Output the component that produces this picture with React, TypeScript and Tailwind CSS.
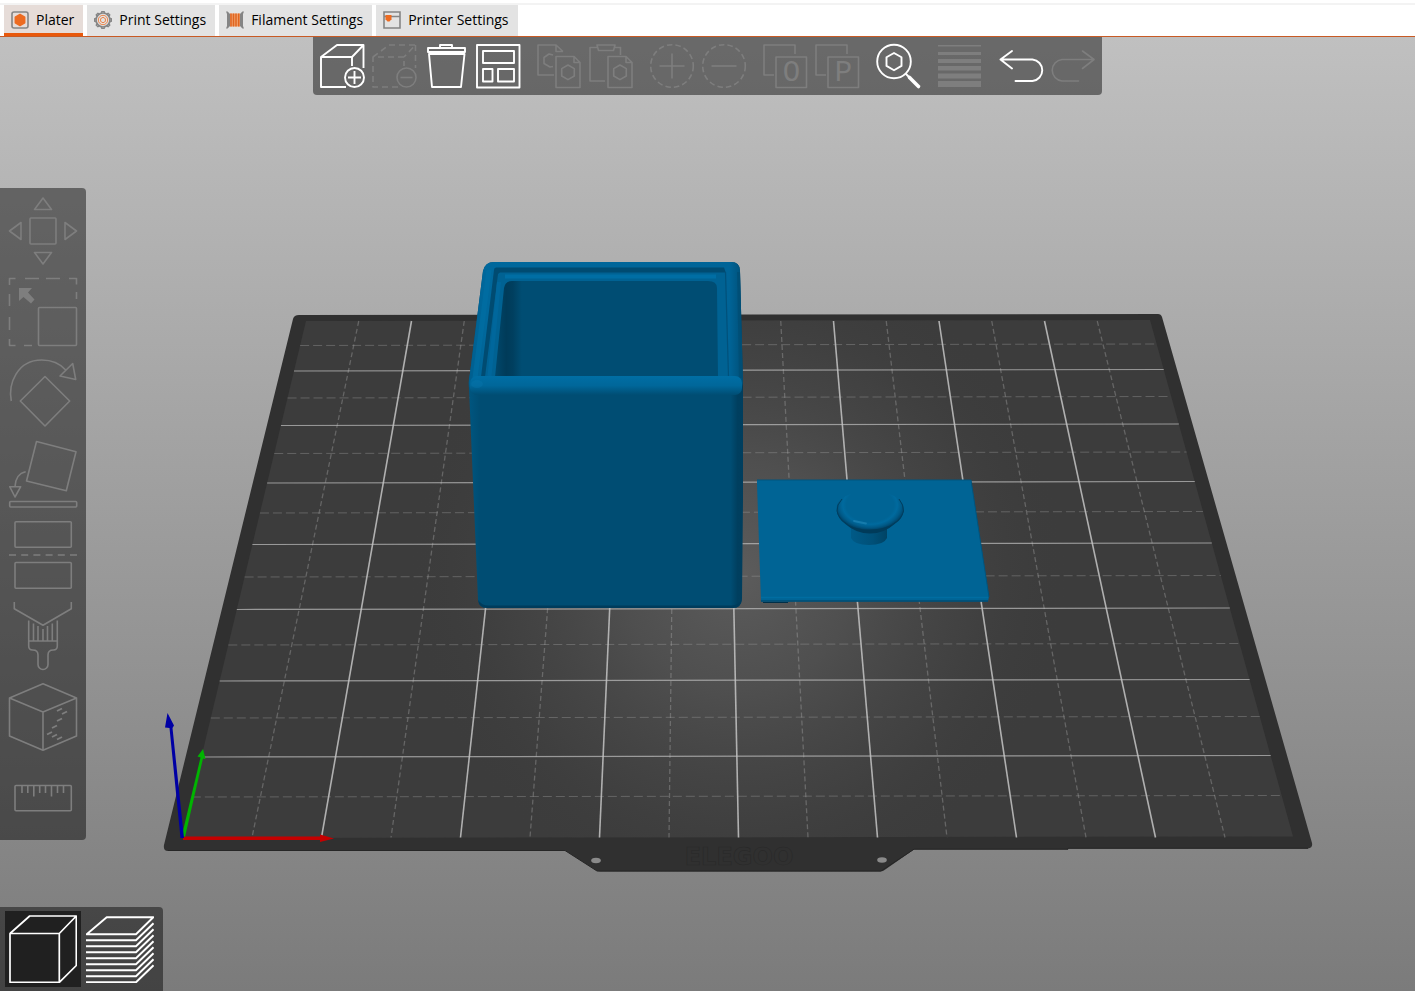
import React from 'react';

type Point = [number, number];

const mix = (a: number, b: number, t: number) => a + (b - a) * t;

/* ---------- Tabs ---------- */

function PlaterIcon() {
  return (
    <svg viewBox="0 0 18 18" className="size-[18px] shrink-0" aria-hidden="true">
      <rect x="1" y="1" width="16" height="16" rx="2" fill="none" stroke="#858585" strokeWidth="1.6" />
      <path d="M9 3.500l4.700 2.700v5.600L9 14.500l-4.700-2.700V6.200z" fill="#ed6b21" stroke="#ed6b21" strokeWidth="1.500" strokeLinejoin="round" />
    </svg>
  );
}

function GearIcon() {
  const teeth = [0, 45, 90, 135, 180, 225, 270, 315];
  return (
    <svg viewBox="0 0 18 18" className="size-[18px] shrink-0" fill="none" aria-hidden="true">
      <circle cx="9" cy="9" r="7" stroke="#858585" strokeWidth="1.7" />
      {teeth.map((a) => (
        <path key={a} d="M7.4 1.9L7.8.6h2.4l.4 1.3" stroke="#858585" strokeWidth="1.3" transform={`rotate(${a} 9 9)`} />
      ))}
      <circle cx="9" cy="9" r="4.700" stroke="#ed6b21" strokeWidth=".8" />
      <path d="M9 6.300l2.400 1.400v2.700L9 11.800l-2.400-1.400V7.700z" stroke="#ed6b21" strokeWidth=".8" />
    </svg>
  );
}

function SpoolIcon() {
  return (
    <svg viewBox="0 0 18 18" className="size-[18px] shrink-0" aria-hidden="true">
      <path d="M0 .5h1.6L4 3v12l-2.4 2.5H0L1 15V3zM18 .5h-1.6L14 3v12l2.4 2.5H18L17 15V3z" fill="#858585" />
      <path d="M4 2.5h10v13H4z" fill="#f0a06c" />
      <path d="M5 2.5v13M7.5 2.5v13M10 2.5v13M12.7 2.5v13" stroke="#e0651f" strokeWidth="1.5" />
    </svg>
  );
}

function PrinterIcon() {
  return (
    <svg viewBox="0 0 18 18" className="size-[18px] shrink-0" aria-hidden="true">
      <path d="M1 1h16v16H1zM1 5.5h16" fill="none" stroke="#858585" strokeWidth="1.6" />
      <path d="M2.500 4h6v4.200L6.500 10.500h-2L2.500 8.200z" fill="#ed6b21" />
    </svg>
  );
}

const tabs = [
  { label: 'Plater', Icon: PlaterIcon },
  { label: 'Print Settings', Icon: GearIcon },
  { label: 'Filament Settings', Icon: SpoolIcon },
  { label: 'Printer Settings', Icon: PrinterIcon },
];

function TabBar() {
  return (
    <header className="border-b border-[#c85a24] bg-white">
      <div className="h-[5px] border-b-2 border-[#f3f3f3]" />
      <nav role="tablist" className="flex gap-1 px-1">
        {tabs.map(({ label, Icon }, i) => (
          <button
            key={label}
            type="button"
            role="tab"
            aria-selected={i === 0}
            className={
              i === 0
                ? 'flex h-[31px] items-center gap-[7px] border-b-3 border-[#e8590c] bg-[#e6dcd8] pt-px pr-[9px] pl-[7px]'
                : 'flex h-[31px] items-center gap-[7px] border-b-3 border-[#e3e3e3] bg-[#e3e3e3] pt-px pr-[9px] pl-[7px]'
            }
          >
            <Icon />
            <span className="text-[14px] leading-5 whitespace-nowrap text-black">{label}</span>
          </button>
        ))}
      </nav>
    </header>
  );
}

/* ---------- Top toolbar ---------- */

const frontPage = (
  <>
    <path d="M19 12.500h18l6 6v25H19zM37 12.500v6h6" />
    <path d="M31 21l6.300 3.600v7.400L31 35.600l-6.300-3.600v-7.400z" />
  </>
);

const letter = "font-['Liberation_Mono',monospace] text-[29px]";

const toolGroups: { label: string; on?: boolean; art: React.ReactNode }[][] = [
  [
    {
      label: 'Add',
      on: true,
      art: (
        <>
          <path d="M26 43H1V13h31v9M1 13L17 1h26.500L32 13M43.500 1v23" />
          <circle cx="34.500" cy="33.500" r="9.500" />
          <path d="M34.500 27v13M28 33.500h13" />
        </>
      ),
    },
    {
      label: 'Delete',
      art: (
        <>
          <path strokeDasharray="6 4" d="M26 43H1V13h31v9M1 13L17 1h26.500L32 13M43.500 1v23" />
          <circle cx="34.500" cy="33.500" r="9.500" />
          <path d="M28.500 33.500h12" />
        </>
      ),
    },
    {
      label: 'Delete all',
      on: true,
      art: <path d="M4 4h37v4H4zM16 4V1h12v3M5 10h35.500L37 43H8z" />,
    },
    {
      label: 'Arrange',
      on: true,
      art: <path d="M1 1h42.500v42.500H1zM7 7h31v12H7zM7 25h9.500v12.500H7zM22 25h16v12.500H22z" />,
    },
  ],
  [
    {
      label: 'Copy',
      art: (
        <>
          <path d="M17 31H1V1h18l7 6.500M19 1v6.500h7M16 22.500l-3 .5-6-3.500v-6l5-3.500 4 1" />
          {frontPage}
        </>
      ),
    },
    {
      label: 'Paste',
      art: (
        <>
          <path d="M16 37H1V3.500h7M26 3.500h5.500V11M8 1h18l-1.500 5.500h-15z" />
          {frontPage}
        </>
      ),
    },
  ],
  [
    {
      label: 'Add instance',
      art: (
        <>
          <circle cx="22" cy="22" r="21.300" strokeDasharray="5.500 3.100" />
          <path d="M22 9.500v25M9.500 22h25" />
        </>
      ),
    },
    {
      label: 'Remove instance',
      art: (
        <>
          <circle cx="22" cy="22" r="21.300" strokeDasharray="5.500 3.100" />
          <path d="M9.500 22h25" />
        </>
      ),
    },
  ],
  [
    {
      label: 'Split to objects',
      art: (
        <>
          <path d="M11 31H1V1h31v9M13 13h30.500v30.500H13z" />
          <text x="28.500" y="37" textAnchor="middle" className={letter} fill="currentColor" stroke="none">O</text>
        </>
      ),
    },
    {
      label: 'Split to parts',
      art: (
        <>
          <path d="M11 31H1V1h31v9M13 13h30.500v30.500H13z" />
          <text x="28.500" y="37" textAnchor="middle" className={letter} fill="currentColor" stroke="none">P</text>
        </>
      ),
    },
  ],
  [
    {
      label: 'Search',
      on: true,
      art: (
        <>
          <circle cx="18" cy="17.500" r="16.800" />
          <path d="M18 9l7.500 4.300v8.600L18 26.200l-7.500-4.300v-8.600z" />
          <path d="M29.500 29.500l4 4" />
          <path d="M33.500 33.500l9 9" strokeWidth="3.600" strokeLinecap="round" />
        </>
      ),
    },
  ],
  [
    {
      label: 'Variable layer height',
      art: (
        <path
          stroke="none"
          fill="currentColor"
          d="M1 1h43v1.500H1zM1 8h43v3H1zM1 15h43v4H1zM1 22h43v4.500H1zM1 29.500h43v5H1zM1 37h43v6H1z"
        />
      ),
    },
  ],
  [
    {
      label: 'Undo',
      on: true,
      art: <path strokeLinecap="round" d="M14 7L2.500 15.500 14 24.500M2.500 15.500H34.500a10.800 10.800 0 0 1 0 21.500H17.500" />,
    },
    {
      label: 'Redo',
      art: <path strokeLinecap="round" d="M32.500 7l11.500 8.500L32.500 24.500M44 15.500H12a10.800 10.800 0 0 0 0 21.500h16.500" />,
    },
  ],
];

function Toolbar() {
  return (
    <div role="toolbar" aria-label="Main tools" className="flex gap-[17px] rounded-b bg-black/45 py-[7px] pr-2 pl-[7px]">
      {toolGroups.map((group, i) => (
        <div key={i} className="flex gap-2">
          {group.map(({ label, on, art }) => (
            <button key={label} type="button" aria-label={label} disabled={!on} className={on ? 'text-white' : 'text-[#7e7e7e]'}>
              <svg viewBox="0 0 44 44" className="size-11 overflow-visible" fill="none" stroke="currentColor" strokeWidth={on ? 1.9 : 1.6} strokeLinejoin="round">
                {art}
              </svg>
            </button>
          ))}
        </div>
      ))}
    </div>
  );
}

/* ---------- Gizmo sidebar ---------- */

const gizmos: { label: string; art: React.ReactNode }[] = [
  {
    label: 'Move',
    art: (
      <>
        <rect x="21" y="21" width="26" height="26" rx="1" />
        <path d="M34 1l8.500 11.500h-17zM34 67l8.500-11.500h-17zM.5 34L12 25.500v17zM67.500 34L56 25.500v17z" />
      </>
    ),
  },
  {
    label: 'Scale',
    art: (
      <>
        <path d="M.5 7V.5h6M16 .5h14M37 .5h14M60 .5h7.500v6M67.500 14v7M.5 16v12M.5 39v13M.5 61v6.500h6M15 67.500h8" />
        <rect x="29.500" y="29.500" width="38" height="38" rx="1" />
        <path d="M10 10h13l-4 4.500 6.500 7-3.500 4-7.500-6.500L10 23z" fill="currentColor" stroke="none" />
      </>
    ),
  },
  {
    label: 'Rotate',
    art: (
      <>
        <path d="M36 17.500L60.700 42 36 67 11.300 42z" />
        <path d="M2.300 42C-1 25 8 1 32.700 1 43 1 51 4.500 56.700 11M63.700 4.500l3 16L51 17z" />
      </>
    ),
  },
  {
    label: 'Place on face',
    art: (
      <>
        <path d="M27.500 1.500L67 11.800 57.300 50.700 17.500 41z" />
        <path d="M16.700 31.700C10 33 6.300 39 6 46.700M.7 46.700h11L6 57z" />
        <rect x=".7" y="61.500" width="67" height="5.500" rx="1" />
      </>
    ),
  },
  {
    label: 'Cut',
    art: (
      <>
        <rect x="6" y=".7" width="56.300" height="25.500" rx="1" />
        <path d="M0 34h68" strokeDasharray="7 5.200" />
        <rect x="6" y="41.500" width="56.300" height="25.800" rx="1" />
      </>
    ),
  },
  {
    label: 'Paint-on supports',
    art: (
      <>
        <path d="M5.300 0v6.700L34 23.300 62.300 6.700V0" />
        <path d="M19.700 18.500v25.500q0 4 4 4 5.300 0 5.300 5v9.500a5 5 0 0 0 10 0V53q0-5 5.300-5 4 0 4-4V18.500M19.700 39h28.600M24.500 21.500V39M29 24v15M34 27v12M38.500 24v15M43.300 21.500V39" />
      </>
    ),
  },
  {
    label: 'Seam painting',
    art: (
      <>
        <path d="M34 .7L67.500 15v38L34 67.300.5 53V15zM.5 15L34 29l33.500-14M34 29v38" />
        <path strokeWidth="1.900" d="M48 28l5-2.500M53 31l5-2.500M48 38l5-2.500M43 45l5-2.500M38 51.500l5-2.500M43 54l5-2.500M48 56.500l5-2.500" />
      </>
    ),
  },
  {
    label: 'Measure',
    art: (
      <>
        <rect x="6" y="21.500" width="56.300" height="25.200" rx="1" />
        <path d="M13 22v7M18.800 22v7M24.800 22v10.500M30.700 22v7M36.500 22v7M42.500 22v10.500M48.500 22v7M54.500 22v7" />
      </>
    ),
  },
];

function GizmoBar() {
  return (
    <div role="toolbar" aria-label="Gizmos" className="flex w-[86px] flex-col items-center gap-[13px] rounded-r bg-black/45 pt-[9px] pb-2">
      {gizmos.map(({ label, art }) => (
        <button key={label} type="button" aria-label={label} disabled className="text-[#7e7e7e]">
          <svg viewBox="0 0 68 68" className="size-[68px] overflow-visible" fill="none" stroke="currentColor" strokeWidth="1.600" strokeLinejoin="round">
            {art}
          </svg>
        </button>
      ))}
    </div>
  );
}

/* ---------- View switch ---------- */

function ViewSwitch() {
  const layers = [0, 1, 2, 3, 4, 5, 6, 7].map((i) => 25.3 + i * 6);
  return (
    <div className="absolute bottom-0 left-0 flex gap-[5px] rounded-tr bg-black/45 py-1 pr-[5px] pl-[5px]">
      <button type="button" aria-label="3D editor view" aria-pressed="true" className="bg-[#202020] p-1 text-white">
        <svg viewBox="0 0 68 68" className="size-[68px]" fill="none" stroke="currentColor" strokeWidth="1.700" strokeLinejoin="round">
          <path d="M1 18.500h49.300v48.800H1zM1 18.500L20.700 1h46.600l-17 17.500M67.300 1v49.500l-17 16.800" />
        </svg>
      </button>
      <button type="button" aria-label="Preview" aria-pressed="false" className="py-1 pr-1 text-white">
        <svg viewBox="0 0 68 68" className="size-[68px]" fill="none" stroke="currentColor" strokeWidth="1.900" strokeLinejoin="round">
          <path d="M.7 19.300L20.700 2.300h46.600L50 19.300z" />
          {layers.map((y) => (
            <path key={y} d={`M0 ${y}H50L67.500 ${y - 17}`} />
          ))}
        </svg>
      </button>
    </div>
  );
}

/* ---------- 3D scene ---------- */

const rowsMajor = [371, 425.5, 483, 544.5, 609.5, 681, 757];
const rowsMinor = [345.5, 398, 453.5, 513, 577, 645, 718, 797];
const leftAt = (y: number) => mix(306, 182, (y - 321) / 517);
const rightAt = (y: number) => mix(1150, 1293, (y - 320) / 516);

function row(y: number) {
  const y2 = y - 1.5;
  return { x1: leftAt(y), y1: y, x2: rightAt(y2), y2 };
}

function column(i: number) {
  return { x1: 306 + i * 52.75, y1: 321, x2: 182.5 + i * 69.5, y2: 837.5 };
}

const points = (list: Point[]) => list.map((p) => p.join(',')).join(' ');

const surface = points([[306, 321], [1150, 320], [1293, 836.5], [182, 838]]);

function Bed() {
  return (
    <g>
      <path
        d="M299 315L1158 314Q1161 314 1162 317L1312 843Q1313 848 1308 848.500H1068V849.500H914L886 869Q883 871.500 880 871.500H600Q597 871.500 594 869L565 850.500H424V851H168Q163 851 164 845L293 319Q294 315 299 315Z"
        fill="#303030"
      />
      <path d="M168 850.500H565L597 871H881L914 849.200H1068V848.300H1308" fill="none" stroke="#262626" />
      <polygon points={surface} fill="#3c3c3c" />
      <polygon points={surface} fill="url(#glow)" />
      <g stroke="#a5a5a5" strokeOpacity=".36" strokeWidth="1" strokeDasharray="9 4">
        {rowsMinor.map((y) => <line key={y} {...row(y)} />)}
      </g>
      <g stroke="#b0b0b0" strokeOpacity=".36" strokeWidth="1.300" strokeDasharray="5 3">
        {[1, 3, 5, 7, 9, 11, 13, 15].map((i) => <line key={i} {...column(i)} />)}
      </g>
      <g stroke="#c0c0c0" strokeOpacity=".7" strokeWidth="1.200">
        {rowsMajor.map((y) => <line key={y} {...row(y)} />)}
      </g>
      <g stroke="#c4c4c4" strokeOpacity=".85" strokeWidth="1.600">
        {[2, 4, 6, 8, 10, 12, 14].map((i) => <line key={i} {...column(i)} />)}
      </g>
      <ellipse cx="596" cy="860.500" rx="4.800" ry="2.800" fill="#8a8a8a" />
      <ellipse cx="882" cy="860" rx="4.800" ry="2.800" fill="#8a8a8a" />
      <text x="739" y="865" textAnchor="middle" className="font-['DejaVu_Sans',sans-serif] text-[24px] font-bold" fill="none" stroke="#282828" strokeWidth=".6">
        ELEGOO
      </text>
    </g>
  );
}

function Box() {
  return (
    <g>
      <path
        d="M494 262H731Q740 262 740 271L743 383V500L742 599Q741 608 733 608H487Q479 608 478 600L469 388Q468 381 470 373L483 271Q485 262 494 262Z"
        fill="url(#wallSide)"
      />
      <path d="M494 262H731Q740 262 740 271L743 383Q742 392 733 392H478Q468 392 469 381L483 271Q485 262 494 262Z" fill="url(#rim)" />
      <path d="M496 267.500H724L726 273H499L486 377H481L494 270Q494 267.500 496 267.500Z" fill="#004b71" />
      <path d="M500 272.500H726L729 377H485L498 274Z" fill="#006293" />
      <path d="M505 276.500H716" stroke="#006ea4" strokeWidth="4" />
      <path d="M499 282L489.500 376" stroke="#00679c" strokeWidth="4" />
      <path d="M512 281H708Q717 281 717 288L718 377H495L504 288Q505 281 512 281Z" fill="url(#inside)" />
      <path d="M725.500 272L728.500 377" stroke="#00517b" strokeWidth="1.200" />
      <path d="M489 270L475 378" stroke="#006fa5" strokeWidth="5" strokeOpacity=".6" />
      <path d="M738.500 272L740.500 378" stroke="#004a70" strokeWidth="3" strokeOpacity=".55" />
      <rect x="470" y="376" width="272" height="19" rx="7" fill="url(#lip)" />
      <path d="M478 600Q479 608 487 608H733Q741 608 742 599Q738 605.500 732 605.500H488Q482 605.500 478 600Z" fill="#003c5c" />
      <ellipse cx="477" cy="384" rx="6" ry="4" fill="#0a7cb4" fillOpacity=".3" />
    </g>
  );
}

function Lid() {
  return (
    <g>
      <path d="M757 480H971L989 597L988 601.500H761L757 484Z" fill="#006495" />
      <path d="M757 480H971L989 597" fill="none" stroke="#00557f" strokeWidth="1" />
      <path d="M761 597.500H988" stroke="#006da1" strokeWidth="1.500" />
      <path d="M761 601H988" stroke="#004c73" strokeWidth="1.500" />
      <path d="M763 602.500H788" stroke="#002f48" strokeWidth="1" />
      <path d="M851 524V538Q854 545 869 545T887 538V524Z" fill="url(#stem)" />
      <path d="M837 510Q837 518.500 846 524.500Q856 533.500 870 533.500T894 524.500Q903.500 518.500 903.500 510Z" fill="#003b5a" />
      <path d="M836.800 508C836 519 850 529.500 870 529.500S904.500 519 903.700 508C903 498 890 491.500 870 491.500S837 498 836.800 508Z" fill="url(#knob)" />
      <path d="M842 499Q836.500 505 837 511Q838.500 519 848 524.500M899 499Q903.800 505 903.500 511Q902 519 892 524.500" fill="none" stroke="#003f60" strokeWidth="1" />
      <path d="M854 521L866 523.500" stroke="#2588b8" strokeWidth="1.800" strokeLinecap="round" strokeOpacity=".6" />
    </g>
  );
}

function Axes() {
  return (
    <g>
      <path d="M183 836.500H320V834.500L334 838.500L320 842V840H183Z" fill="#c40000" />
      <path d="M182 835L200.500 757.500L197.500 756.500L203 749L205.500 759L203 758.500L185 837Z" fill="#00b400" />
      <path d="M180.500 838L169.500 728L165 727.500L167.500 713L174 725.500L172.500 728L184 838Z" fill="#0000a4" />
    </g>
  );
}

function Scene() {
  return (
    <svg viewBox="0 37 1415 954" preserveAspectRatio="xMidYMid slice" role="img" aria-label="Print bed with a box and a lid" className="absolute inset-0 h-full w-full">
      <defs>
        <radialGradient id="glow" gradientUnits="userSpaceOnUse" cx="738" cy="575" r="330">
          <stop offset="0" stopColor="#5c5c5c" />
          <stop offset=".35" stopColor="#515151" stopOpacity=".9" />
          <stop offset=".7" stopColor="#454545" stopOpacity=".6" />
          <stop offset="1" stopColor="#3c3c3c" stopOpacity="0" />
        </radialGradient>
        <linearGradient id="wallSide">
          <stop offset="0" stopColor="#005680" />
          <stop offset=".04" stopColor="#004d73" />
          <stop offset=".955" stopColor="#004d73" />
          <stop offset=".98" stopColor="#003f5f" />
          <stop offset="1" stopColor="#003e5e" />
        </linearGradient>
        <linearGradient id="rim">
          <stop offset="0" stopColor="#005e8e" />
          <stop offset=".06" stopColor="#00689c" />
          <stop offset=".95" stopColor="#006497" />
          <stop offset="1" stopColor="#004f77" />
        </linearGradient>
        <linearGradient id="inside">
          <stop offset="0" stopColor="#00486c" />
          <stop offset=".05" stopColor="#003b59" />
          <stop offset=".08" stopColor="#003f5f" />
          <stop offset=".12" stopColor="#004d73" />
          <stop offset="1" stopColor="#004d73" />
        </linearGradient>
        <linearGradient id="lip" x2="0" y2="1">
          <stop offset="0" stopColor="#006ea4" />
          <stop offset=".5" stopColor="#00679a" />
          <stop offset="1" stopColor="#004d73" />
        </linearGradient>
        <radialGradient id="knob" gradientUnits="userSpaceOnUse" cx="870" cy="505" r="35" gradientTransform="matrix(1 0 0 .71 0 146.450)">
          <stop offset="0" stopColor="#006495" />
          <stop offset=".68" stopColor="#006495" />
          <stop offset=".78" stopColor="#006a9e" />
          <stop offset=".9" stopColor="#005a88" />
          <stop offset="1" stopColor="#004469" />
        </radialGradient>
        <linearGradient id="stem">
          <stop offset="0" stopColor="#005a87" />
          <stop offset=".6" stopColor="#005078" />
          <stop offset="1" stopColor="#004364" />
        </linearGradient>
      </defs>
      <Bed />
      <Box />
      <Lid />
      <Axes />
    </svg>
  );
}

export default function App() {
  return (
    <div className="flex min-h-screen flex-col bg-white font-['Open_Sans','Noto_Sans',sans-serif]">
      <TabBar />
      <main className="relative flex flex-1 flex-col bg-linear-to-b/srgb from-[#c0c0c0] to-[#7b7b7b]">
        <Scene />
        <div className="absolute inset-x-0 top-0 flex justify-center">
          <Toolbar />
        </div>
        <div className="relative flex flex-1 items-center py-[100px]">
          <GizmoBar />
        </div>
        <ViewSwitch />
      </main>
    </div>
  );
}
